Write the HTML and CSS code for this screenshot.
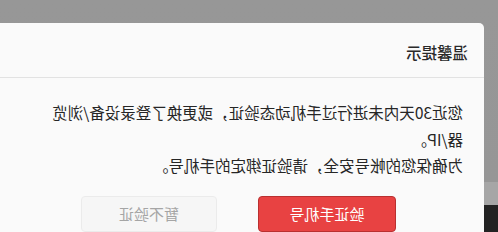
FILE: index.html
```html
<!DOCTYPE html>
<html lang="zh-CN">
<head>
    <meta charset="UTF-8">
    <meta name="viewport" content="width=device-width, initial-scale=1.0">
    <title>温馨提示</title>
    <link rel="stylesheet" href="styles.css">
</head>
<body>
    <div class="stage">
        <div class="dialog">
            <div class="dialog-header">温馨提示</div>
            <div class="dialog-body">
                <p class="notice">您近30天内未进行过手机动态验证，或更换了登录设备/浏览器/IP。</p>
                <p class="notice">为确保您的帐号安全，请验证绑定的手机号。</p>
                <div class="btn-row">
                    <button class="btn btn-primary">验证手机号</button>
                    <button class="btn btn-plain">暂不验证</button>
                </div>
            </div>
        </div>
    </div>
</body>
</html>
```

FILE: styles.css
```css
html, body {
    margin: 0;
    height: 100%;
    overflow: hidden;
}
body {
    font-family: "Noto Sans CJK SC", "Noto Sans", sans-serif;
    background: linear-gradient(#979797 0, #969696 182px, #a6a6a6 182px, #a6a6a6 205px, #232323 205px);
}
/* screenshot is mirrored, so the whole stage is flipped */
.stage {
    width: 498px;
    height: 232px;
    padding-top: 23px;
    padding-left: 14px;
    box-sizing: border-box;
    transform: scaleX(-1);
}
.dialog {
    width: 484px;
    height: 209px;
    background: #fafafa;
    border-radius: 5px 0 0 0;
    overflow: hidden;
}
.dialog-header {
    padding: 18px 16px 14px;
    line-height: 22px;
    font-size: 15.5px;
    font-weight: 500;
    color: #2a2a2a;
    border-bottom: 1px solid #e2e2e2;
}
.dialog-body {
    padding: 21px 0 0 21px;
    width: 420px;
}
.notice {
    margin: 0;
    font-size: 15.5px;
    line-height: 26.5px;
    color: #262626;
}
.btn-row {
    display: flex;
    gap: 41px;
    margin-top: 17px;
    padding-left: 67px;
}
.btn {
    width: 138px;
    height: 36px;
    border-radius: 4px;
    font-family: inherit;
    font-size: 15px;
    cursor: pointer;
}
.btn-primary {
    background: #e84242;
    border: 1px solid #b93030;
    color: #fff;
}
.btn-plain {
    width: 136px;
    background: #f6f6f6;
    border: 1px solid #ebebeb;
    color: #a5a5a5;
}
```
